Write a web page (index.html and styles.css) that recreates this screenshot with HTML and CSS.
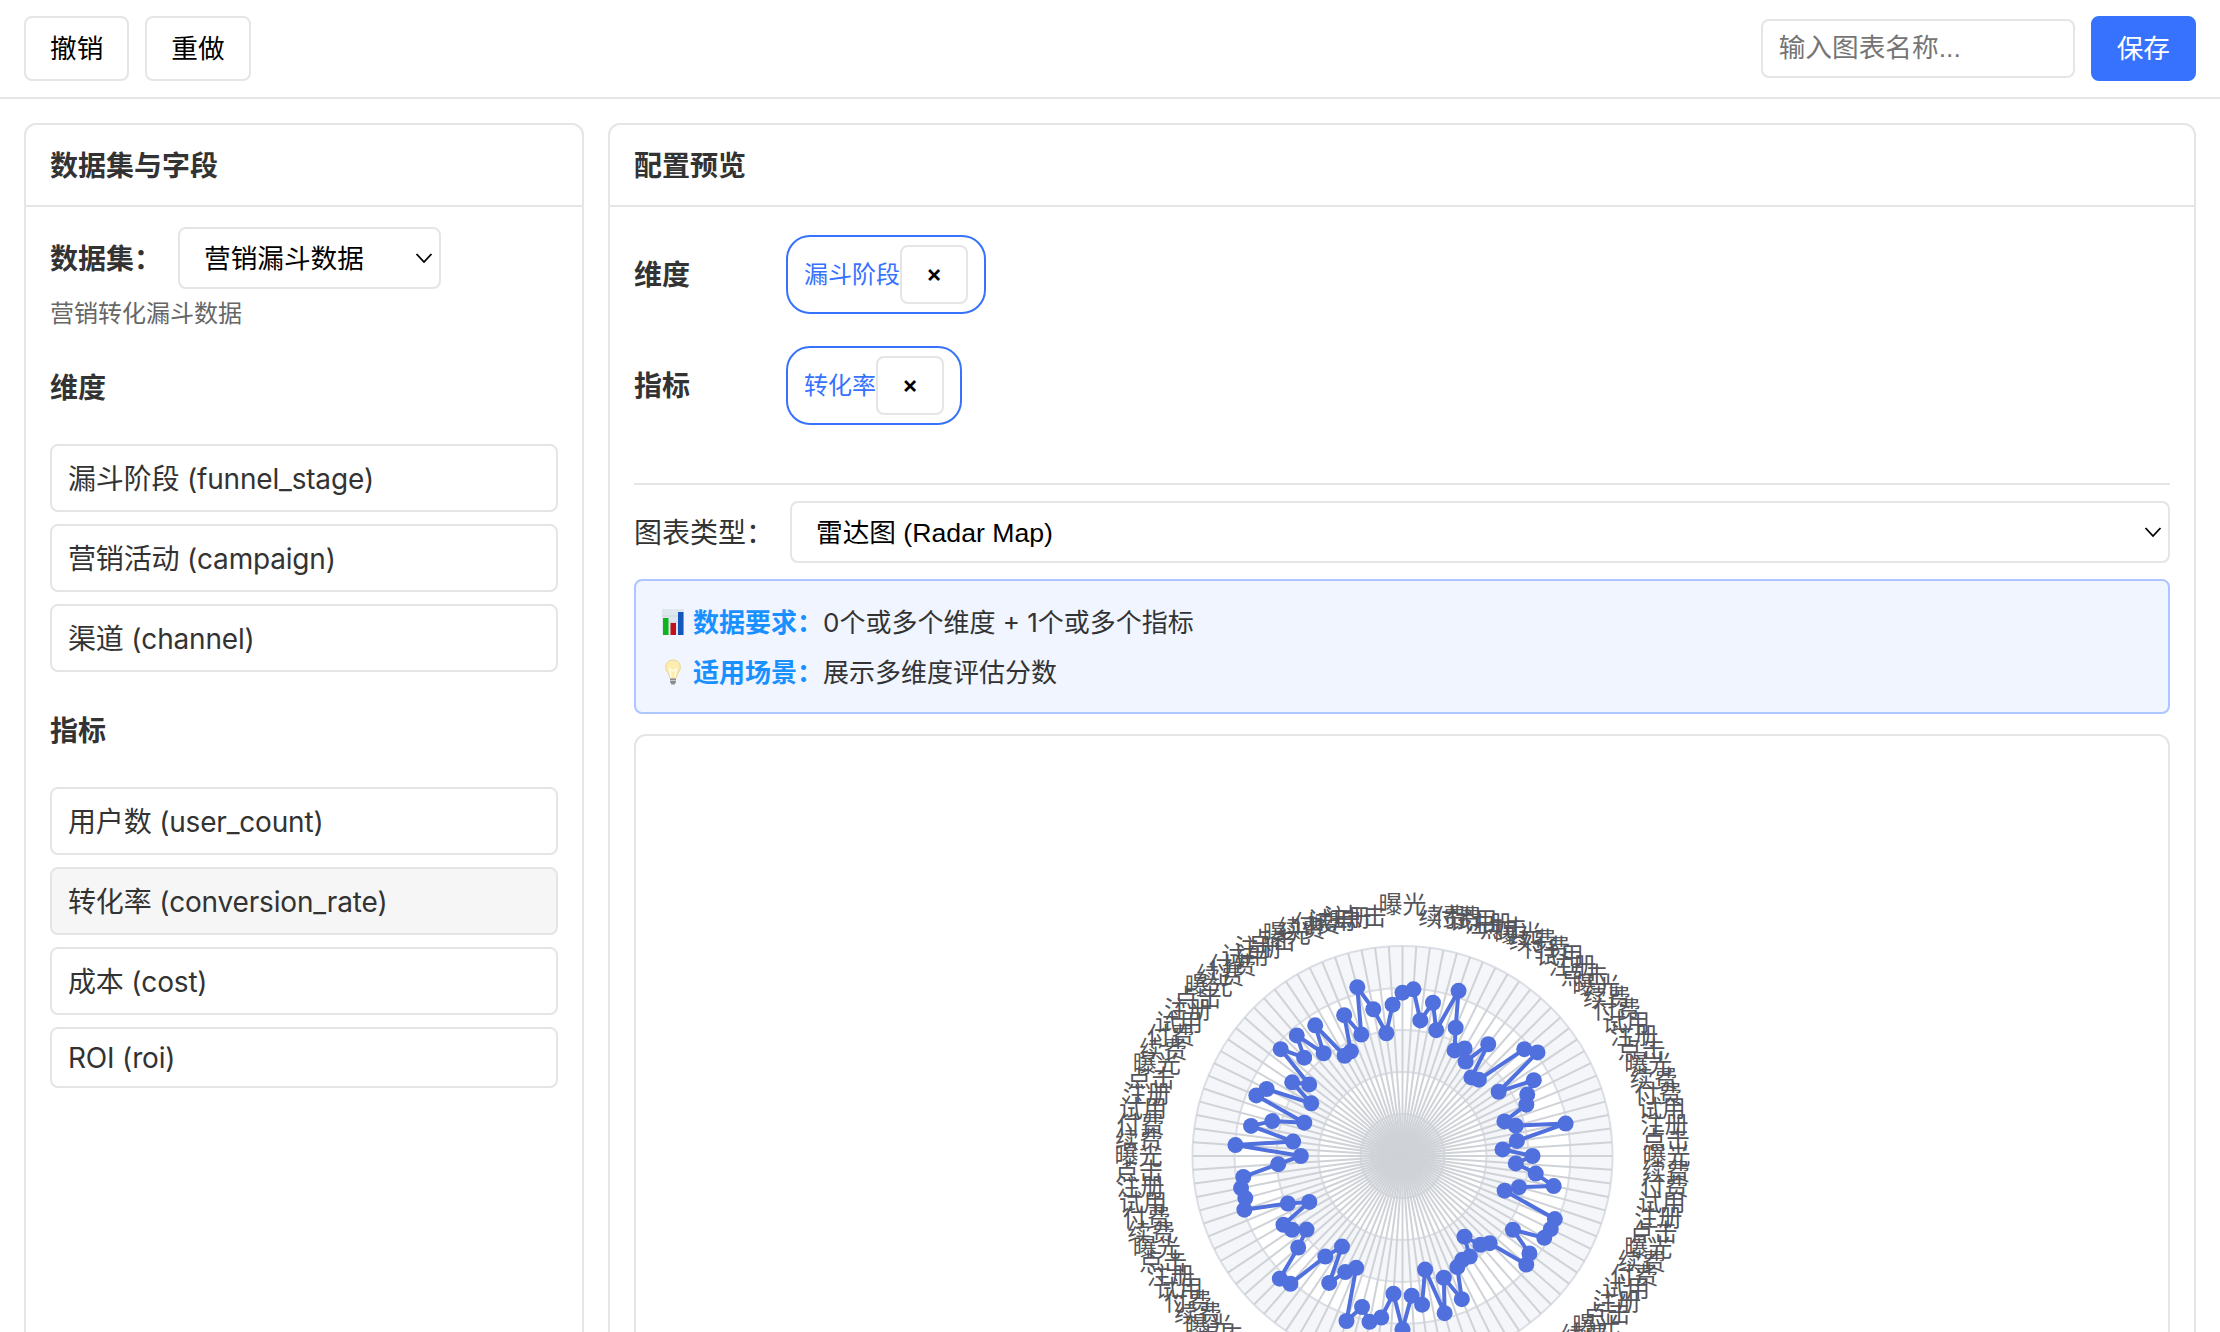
FILE: index.html
```html
<!DOCTYPE html>
<html lang="zh-CN">
<head>
<meta charset="utf-8">
<title>图表配置</title>
<link rel="stylesheet" href="styles.css">
</head>
<body>
<header class="toolbar">
  <button class="btn">撤销</button>
  <button class="btn">重做</button>
  <input class="name-input" type="text" placeholder="输入图表名称...">
  <button class="btn btn-primary">保存</button>
</header>
<main class="workspace">
  <aside class="panel fields">
    <h2 class="panel-title">数据集与字段</h2>
    <div class="fields-body">
      <div class="dataset-row">
        <label class="dataset-label">数据集：</label>
        <div class="select dataset-select"><span>营销漏斗数据</span><svg class="chevron" viewBox="0 0 18 12"><path d="M1.500 2 9 10 16.500 2"/></svg></div>
      </div>
      <p class="dataset-desc">营销转化漏斗数据</p>
      <h3 class="group-title">维度</h3>
      <ul class="field-list">
        <li class="field">漏斗阶段 (funnel_stage)</li>
        <li class="field">营销活动 (campaign)</li>
        <li class="field">渠道 (channel)</li>
      </ul>
      <h3 class="group-title">指标</h3>
      <ul class="field-list">
        <li class="field">用户数 (user_count)</li>
        <li class="field field-hover">转化率 (conversion_rate)</li>
        <li class="field">成本 (cost)</li>
        <li class="field field-latin">ROI (roi)</li>
      </ul>
    </div>
  </aside>
  <section class="panel preview">
    <h2 class="panel-title">配置预览</h2>
    <div class="preview-body">
      <div class="slots">
        <div class="slot"><span class="slot-label">维度</span><span class="tag">漏斗阶段<button class="tag-remove">×</button></span></div>
        <div class="slot"><span class="slot-label">指标</span><span class="tag">转化率<button class="tag-remove">×</button></span></div>
      </div>
      <div class="type-row">
        <label class="type-label">图表类型：</label>
        <div class="select type-select"><span>雷达图 (Radar Map)</span><svg class="chevron" viewBox="0 0 18 12"><path d="M1.500 2 9 10 16.500 2"/></svg></div>
      </div>
      <div class="info">
        <p class="info-line">
          <svg class="info-icon" viewBox="0 0 22 26"><rect width="22" height="26" fill="#dfe7ee"/><path d="M0 7h22M0 13h22M0 19h22" stroke="#cbd6df"/><rect x="1" y="9" width="5.500" height="17" fill="#0db51c"/><rect x="8.500" y="14" width="5.500" height="12" fill="#c3101c"/><rect x="16" y="3" width="5.500" height="23" fill="#1557bd"/></svg>
          <strong class="info-key">数据要求：</strong><span>0个或多个维度 + 1个或多个指标</span>
        </p>
        <p class="info-line">
          <svg class="info-icon" viewBox="0 0 22 26"><path d="M11 1C6.500 1 3.700 4.200 3.700 8.300c0 4.200 3.600 6 4.300 11h6c.7-5 4.300-6.800 4.300-11C18.300 4.200 15.500 1 11 1Z" fill="#fdeeb0" stroke="#ead38d"/><path d="M9 19 8 10l3 2 3-2-1 9" fill="none" stroke="#fffbe6" stroke-width="1.500"/><path d="M8 19.500h6v3.500l-1.500 2.500h-3L8 23Z" fill="#8c8c90"/><path d="M8 21.500h6" stroke="#c9c9cc"/></svg>
          <strong class="info-key">适用场景：</strong><span>展示多维度评估分数</span>
        </p>
      </div>
      <div class="chart">
        <svg id="radar" class="radar" width="1532" height="840" viewBox="0 0 1532 840"></svg>
      </div>
    </div>
  </section>
</main>
<script src="radar.js"></script>
</body>
</html>
```
FILE: styles.css
```css
* { box-sizing: border-box; }
body {
  margin: 0;
  height: 1332px;
  overflow: hidden;
  background: #fff;
  color: #333;
  font: 28px/1.5 Inter, "Noto Sans CJK SC", sans-serif;
}
h2, h3, p, ul { margin: 0; padding: 0; }
.toolbar {
  display: flex;
  align-items: center;
  gap: 16px;
  height: 99px;
  padding: 0 24px;
  border-bottom: 2px solid #e5e5e5;
}
.btn {
  width: 105.300px;
  height: 65px;
  padding: 0 0 4px;
  border: 2px solid #e5e5e5;
  border-radius: 8px;
  background: #fff;
  color: #000;
  font: 26.670px "Liberation Sans", "Noto Sans CJK SC", sans-serif;
}
.btn-primary { border-color: #3772ff; background: #3772ff; color: #fff; }
.name-input {
  width: 314px;
  height: 59px;
  margin-left: auto;
  padding: 0 16px;
  border: 2px solid #e5e5e5;
  border-radius: 8px;
  font: 26.670px "Liberation Sans", "Noto Sans CJK SC", sans-serif;
}
.name-input::placeholder { color: #757575; }
.workspace {
  display: grid;
  grid-template-columns: 560px 1fr;
  gap: 24px;
  height: 1500px;
  padding: 24px;
}
.panel { border: 2px solid #e5e5e5; border-radius: 12px; background: #fff; }
.panel-title {
  height: 82px;
  padding: 1px 0 0 24px;
  border-bottom: 2px solid #e5e5e5;
  font-size: 28px;
  font-weight: 600;
  line-height: 80px;
}
.fields-body { padding: 20px 24px; }
.dataset-row { display: flex; align-items: center; height: 62px; }
.dataset-label { width: 128px; padding-top: 2px; font-weight: 600; }
.select {
  display: flex;
  align-items: center;
  justify-content: space-between;
  height: 62px;
  padding: 0 6px 4px 24px;
  border: 2px solid #e5e5e5;
  border-radius: 8px;
  color: #000;
  font: 26.670px "Liberation Sans", "Noto Sans CJK SC", sans-serif;
}
.dataset-select { width: 263px; }
.chevron { width: 18px; height: 12px; margin-top: 4px; fill: none; stroke: #000; stroke-width: 1.800; }
.dataset-desc { height: 48px; padding-top: 1px; color: #666; font-size: 24px; line-height: 48px; }
.group-title { height: 107px; padding-top: 30px; font-size: 28px; font-weight: 600; line-height: 42px; }
.field-list { display: grid; gap: 12px; list-style: none; }
.field {
  height: 68px;
  padding: 1px 16px 0;
  border: 2px solid #e5e5e5;
  border-radius: 8px;
  line-height: 64px;
  letter-spacing: -0.180px;
}
.field-hover { background: #f6f6f6; }
.field-latin { height: 61px; line-height: 57px; }
.field-list + .group-title { height: 115px; padding-top: 38px; }
.preview-body { padding: 28px 24px 0; }
.slots { display: grid; gap: 32px; height: 250px; align-content: start; border-bottom: 2px solid #e5e5e5; }
.slot { display: flex; align-items: center; height: 79px; }
.slot-label { width: 152px; padding-top: 1px; font-weight: 600; }
.tag {
  display: flex;
  align-items: center;
  height: 79px;
  padding: 0 16px;
  border: 2px solid #3772ff;
  border-radius: 24px;
  color: #3772ff;
  font-size: 24px;
}
.tag-remove {
  width: 68px;
  height: 59px;
  padding: 0 0 3px;
  border: 2px solid #e5e5e5;
  border-radius: 8px;
  background: #fff;
  color: #000;
  font: 600 24px Inter, sans-serif;
}
.type-row { display: flex; align-items: center; margin-top: 16px; }
.type-label { width: 156px; padding-top: 1px; }
.type-select { flex: 1; }
.info {
  height: 135px;
  margin-top: 16px;
  padding: 16px 24px;
  border: 2px solid #adc6ff;
  border-radius: 8px;
  background: #f0f5ff;
  font-size: 26px;
}
.info-line { display: flex; align-items: center; height: 50px; }
.info-icon { width: 22px; height: 26px; margin: 0 9px 0 2px; }
.info-key { color: #1890ff; font-weight: 600; }
.chart { height: 844px; margin-top: 20px; border: 2px solid #e5e5e5; border-radius: 12px; }
.radar { display: block; }
.radar-label { fill: #54555a; font: 24px "Noto Sans CJK SC", sans-serif; }
```
FILE: radar.js
```js
// Radar chart of the funnel data: one spoke per record, counter-clockwise from the top.
const NS = 'http://www.w3.org/2000/svg';
const svg = document.getElementById('radar');
const CX = 766.5, CY = 420, R = 210, GAP = 30;
const stages = ['曝光', '点击', '注册', '试用', '付费', '续费'];
// Each record as horizontal and vertical components, full scale 630.
const records = [
  [0,-490],[-31,-454],[-50,-368],[-89,-440],[-137,-506],[-125,-364],[-176,-422],[-155,-314],
  [-175,-300],[-262,-392],[-237,-308],[-317,-362],[-295,-295],[-365,-321],[-279,-216],[-331,-221],
  [-273,-159],[-407,-202],[-438,-183],[-294,-102],[-390,-107],[-454,-92],[-328,-44],[-501,-35],
  [-305,0],[-373,22],[-478,60],[-485,93],[-472,125],[-475,159],[-345,140],[-281,135],
  [-359,203],[-333,219],[-290,218],[-315,272],[-370,366],[-339,381],[-234,300],[-184,270],
  [-223,379],[-174,347],[-140,335],[-171,494],[-125,452],[-102,497],[-67,484],[-30,413],
  [0,520],[26,419],[58,446],[66,341],[125,472],[122,366],[177,430],[163,334],
  [180,311],[203,301],[186,242],[234,266],[262,261],[371,326],[381,292],[332,220],
  [425,246],[446,217],[458,187],[307,102],[350,91],[454,88],[400,50],[340,20],
  [390,0],[300,-22],[343,-47],[489,-99],[339,-94],[305,-106],[371,-155],[373,-187],
  [393,-229],[287,-195],[404,-312],[364,-322],[227,-231],[205,-237],[255,-337],[188,-284],
  [184,-324],[156,-317],[157,-386],[167,-496],[99,-378],[90,-460],[51,-407],[32,-500]
];
const N = records.length;
function add(tag, attrs, text) {
  const el = document.createElementNS(NS, tag);
  for (const k in attrs) el.setAttribute(k, attrs[k]);
  if (text) el.textContent = text;
  svg.appendChild(el);
}
function at(i, r) {
  const a = i / N * 2 * Math.PI;
  return [CX - r * Math.sin(a), CY - r * Math.cos(a)];
}
for (let ring = 5; ring > 0; ring--) {
  add('circle', { cx: CX, cy: CY, r: R * ring / 5, fill: ring % 2 ? '#f4f6fa' : '#fff', stroke: '#dbdee4', 'stroke-width': 2 });
}
for (let i = 0; i < N; i++) {
  const [x, y] = at(i, R);
  add('line', { x1: CX, y1: CY, x2: x, y2: y, stroke: '#cfd2d7', 'stroke-width': 2 });
}
for (let i = 0; i < N; i++) {
  const [x, y] = at(i, R + GAP);
  const centred = i % (N / 2) === 0;
  const dy = i === 0 ? -3 : i === N / 2 ? 20 : 8;
  add('text', { x, y: y + dy, class: 'radar-label', 'text-anchor': centred ? 'middle' : i < N / 2 ? 'end' : 'start' }, stages[i % 6]);
}
const points = records.map(([a, b], i) => at(i, Math.hypot(a, b) / 630 * R));
add('polygon', { points: points.map(p => p.join()).join(' '), fill: 'none', stroke: '#5070dd', 'stroke-width': 4, 'stroke-linejoin': 'bevel' });
points.forEach(([cx, cy]) => add('circle', { cx, cy, r: 8, fill: '#5070dd' }));
```
